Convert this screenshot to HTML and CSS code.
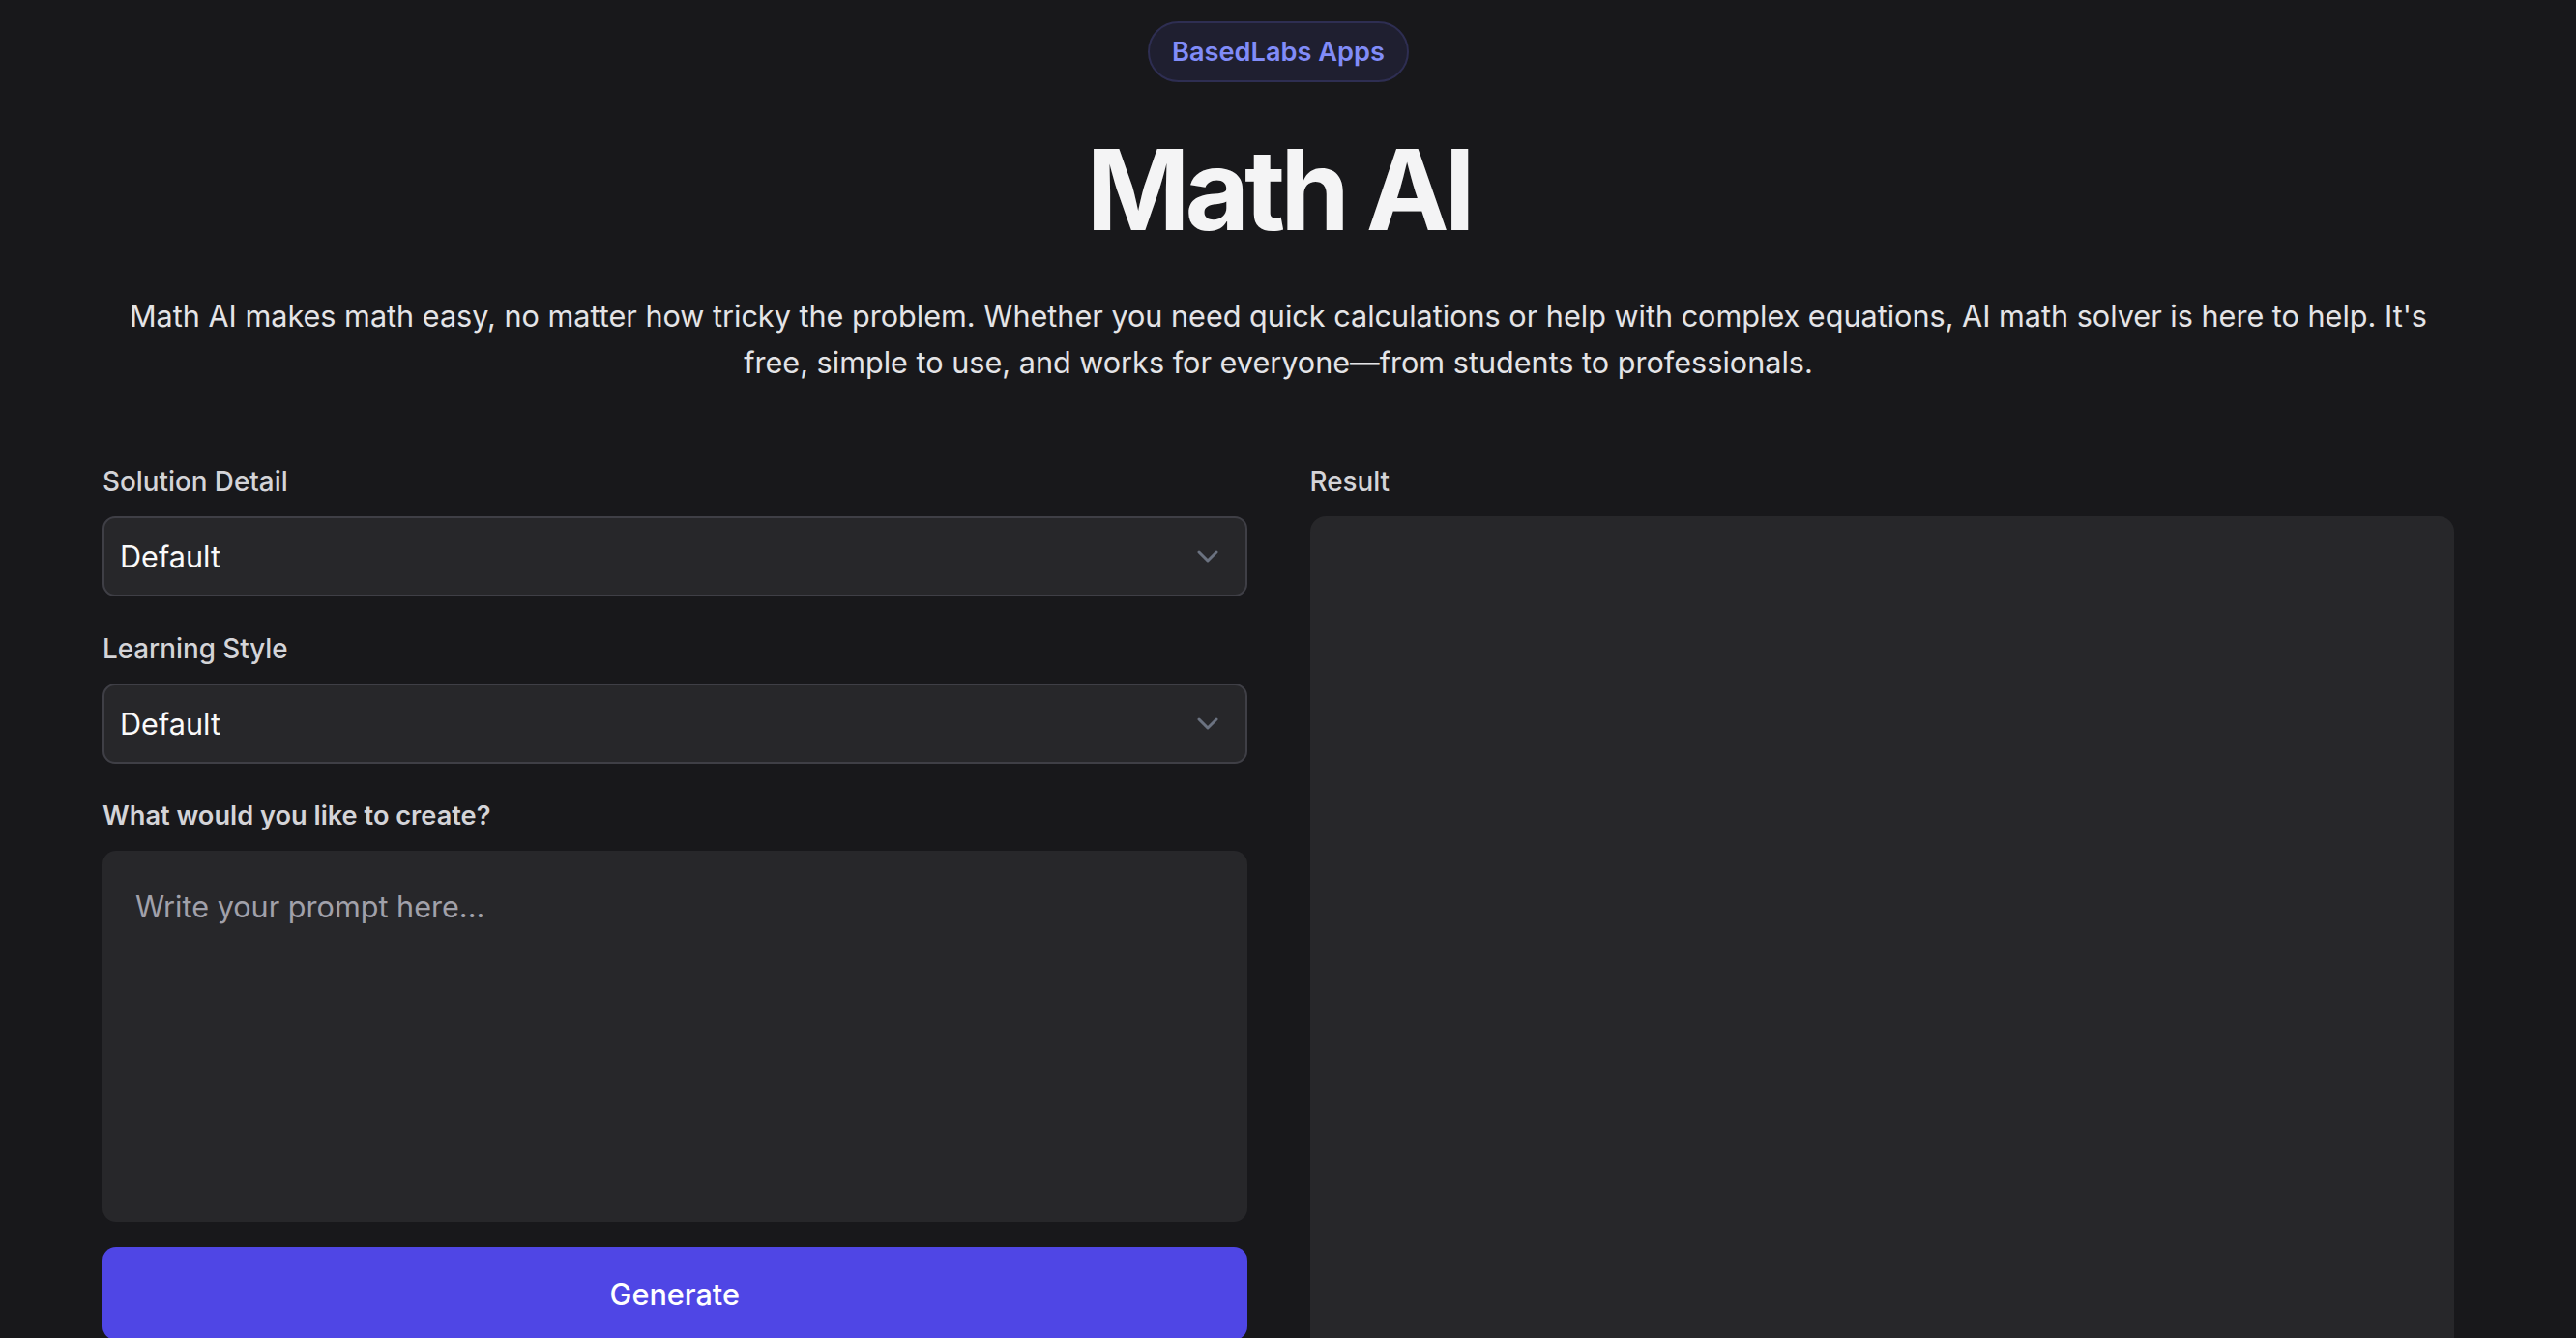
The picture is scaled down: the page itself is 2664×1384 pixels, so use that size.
FILE: index.html
```html
<!DOCTYPE html>
<html lang="en">
<head>
    <meta charset="UTF-8">
    <meta name="viewport" content="width=device-width, initial-scale=1.0">
    <title>Math AI</title>
    <link rel="stylesheet" href="styles.css">
</head>
<body>
    <div class="page">
        <header class="hero">
            <span class="badge">BasedLabs Apps</span>
            <h1>Math AI</h1>
            <p class="intro">Math AI makes math easy, no matter how tricky the problem. Whether you need quick calculations or help with complex equations, AI math solver is here to help. It's free, simple to use, and works for everyone—from students to professionals.</p>
        </header>

        <div class="workspace">
            <div class="form-col">
                <div class="form-group">
                    <label for="solutionDetail">Solution Detail</label>
                    <div class="select-wrap">
                        <select id="solutionDetail">
                            <option>Default</option>
                            <option>Brief</option>
                            <option>Step by step</option>
                        </select>
                        <svg class="chevron" width="22" height="13" viewBox="0 0 22 13">
                            <polyline points="2,2 11,11 20,2" fill="none" stroke="currentColor" stroke-width="3" stroke-linecap="round" stroke-linejoin="round"/>
                        </svg>
                    </div>
                </div>

                <div class="form-group">
                    <label for="learningStyle">Learning Style</label>
                    <div class="select-wrap">
                        <select id="learningStyle">
                            <option>Default</option>
                            <option>Visual</option>
                            <option>Practical</option>
                        </select>
                        <svg class="chevron" width="22" height="13" viewBox="0 0 22 13">
                            <polyline points="2,2 11,11 20,2" fill="none" stroke="currentColor" stroke-width="3" stroke-linecap="round" stroke-linejoin="round"/>
                        </svg>
                    </div>
                </div>

                <div class="form-group">
                    <label for="prompt" class="strong">What would you like to create?</label>
                    <textarea id="prompt" placeholder="Write your prompt here..."></textarea>
                </div>

                <button class="btn">Generate</button>
            </div>

            <div class="result-col">
                <label>Result</label>
                <div class="result-box"></div>
            </div>
        </div>
    </div>
</body>
</html>
```

FILE: styles.css
```css
* {
    margin: 0;
    padding: 0;
    box-sizing: border-box;
}

body {
    font-family: Inter, 'Noto Sans', sans-serif;
    background: #18181b;
    color: #e4e4e7;
    padding: 22px 20px 0 0;
    min-height: 100vh;
}

.page {
    max-width: 2432px;
    margin: 0 auto;
}

.hero {
    display: flex;
    flex-direction: column;
    align-items: center;
    text-align: center;
}

.badge {
    display: inline-block;
    padding: 9.5px 23px;
    border: 2px solid #2e2e52;
    border-radius: 999px;
    background: #1f1f30;
    color: #818cf8;
    font-size: 27.2px;
    line-height: 40px;
    font-weight: 600;
}

h1 {
    margin-top: 54px;
    font-size: 115px;
    line-height: 1;
    font-weight: 700;
    letter-spacing: -0.045em;
    color: #f4f4f5;
}

.intro {
    margin-top: 49px;
    font-size: 30.6px;
    line-height: 47.6px;
    color: #e4e4e7;
}

.workspace {
    display: grid;
    grid-template-columns: 1fr 1fr;
    gap: 65px;
    margin-top: 80px;
}

.form-col {
    display: flex;
    flex-direction: column;
}

.form-group {
    margin-bottom: 34px;
}

.form-group:nth-child(3) {
    margin-bottom: 26px;
}

label {
    display: block;
    margin-bottom: 16px;
    font-size: 27.8px;
    line-height: 40px;
    font-weight: 500;
    color: #d4d4d8;
}

label.strong {
    font-weight: 600;
    font-size: 27.2px;
}

.select-wrap {
    position: relative;
}

select {
    appearance: none;
    -webkit-appearance: none;
    width: 100%;
    height: 83px;
    padding: 0 70px 0 16px;
    background: #27272a;
    border: 2px solid #3f3f46;
    border-radius: 13px;
    font-family: Inter, 'Noto Sans', sans-serif;
    font-size: 30.6px;
    color: #fafafa;
    outline: none;
}

.chevron {
    position: absolute;
    right: 30px;
    top: 35px;
    color: #6b7280;
    pointer-events: none;
}

textarea {
    display: block;
    width: 100%;
    height: 384px;
    padding: 35px 34px 30px;
    background: #27272a;
    border: none;
    border-radius: 14px;
    font-family: Inter, 'Noto Sans', sans-serif;
    font-size: 30.6px;
    line-height: 1.5;
    color: #fafafa;
    resize: none;
    outline: none;
}

textarea::placeholder {
    color: #a1a1aa;
}

.btn {
    width: 100%;
    height: 96px;
    background: #4f46e5;
    color: #ffffff;
    border: none;
    border-radius: 14px;
    font-family: Inter, 'Noto Sans', sans-serif;
    font-size: 30.6px;
    font-weight: 500;
    cursor: pointer;
}

.result-col {
    display: flex;
    flex-direction: column;
}

.result-box {
    height: 900px;
    background: #27272a;
    border-radius: 16px;
}
```
